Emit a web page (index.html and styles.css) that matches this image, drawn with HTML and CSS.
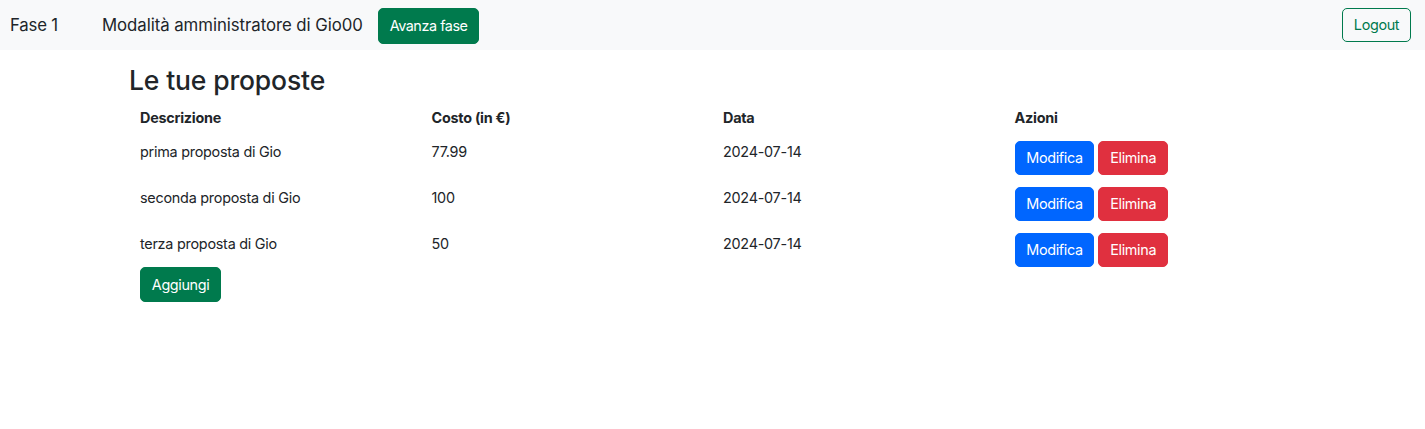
FILE: index.html
```html
<!DOCTYPE html>
<html lang="it">
<head>
<meta charset="utf-8">
<title>Le tue proposte</title>
<link rel="stylesheet" href="styles.css">
</head>
<body>
<nav class="navbar">
  <div class="nav-left">
    <span class="brand">Fase 1</span>
    <span class="admin">Modalità amministratore di Gio00</span>
    <button class="btn btn-success btn-nav">Avanza fase</button>
  </div>
  <button class="btn btn-outline-success btn-logout">Logout</button>
</nav>
<main class="container">
  <h2 class="title">Le tue proposte</h2>
  <div class="table">
    <div class="row head">
      <div class="cell">Descrizione</div>
      <div class="cell">Costo (in €)</div>
      <div class="cell">Data</div>
      <div class="cell">Azioni</div>
    </div>
    <div class="row">
      <div class="cell">prima proposta di Gio</div>
      <div class="cell">77.99</div>
      <div class="cell">2024-07-14</div>
      <div class="cell actions"><button class="btn btn-primary">Modifica</button><button class="btn btn-danger">Elimina</button></div>
    </div>
    <div class="row">
      <div class="cell">seconda proposta di Gio</div>
      <div class="cell">100</div>
      <div class="cell">2024-07-14</div>
      <div class="cell actions"><button class="btn btn-primary">Modifica</button><button class="btn btn-danger">Elimina</button></div>
    </div>
    <div class="row">
      <div class="cell">terza proposta di Gio</div>
      <div class="cell">50</div>
      <div class="cell">2024-07-14</div>
      <div class="cell actions"><button class="btn btn-primary">Modifica</button><button class="btn btn-danger">Elimina</button></div>
    </div>
    <div class="add-row"><button class="btn btn-success">Aggiungi</button></div>
  </div>
</main>
</body>
</html>
```
FILE: styles.css
```css
* { box-sizing: border-box; }
html, body { margin: 0; padding: 0; }
body {
  font-family: Inter, "Noto Sans", "Liberation Sans", sans-serif;
  font-size: 14.4px;
  line-height: 1.5;
  letter-spacing: -0.25px;
  color: #212529;
  background: #fff;
}
.navbar {
  height: 50px;
  background: #f8f9fa;
  display: flex;
  align-items: center;
  justify-content: space-between;
  padding: 0 14px 0 10px;
}
.nav-left { display: flex; align-items: center; padding-top: 1px; }
.brand { font-size: 16.8px; margin-right: 44px; letter-spacing: -0.2px; }
.admin { font-size: 16.8px; margin-right: 15px; letter-spacing: -0.05px; }
.btn {
  font-family: inherit;
  font-size: 14.4px;
  line-height: 21.6px;
  letter-spacing: -0.35px;
  padding: 5.4px 10.8px;
  border: 1px solid transparent;
  border-radius: 5px;
  cursor: pointer;
}
.btn-success { background: #007a4d; border-color: #007a4d; color: #fff; }
.btn-outline-success { background: transparent; border-color: #007a4d; color: #007a4d; }
.btn-primary { background: #0066ff; border-color: #0066ff; color: #fff; }
.btn-danger { background: #e0303f; border-color: #e0303f; color: #fff; }
.btn-nav { height: 36px; letter-spacing: -0.45px; }
.btn-logout { height: 34px; }
.container { padding-left: 129px; }
.title {
  font-size: 26.5px;
  font-weight: 500;
  line-height: 1.2;
  letter-spacing: -0.15px;
  margin: 15px 0 10px;
}
.table { margin-left: 4px; width: 1166px; }
.row { display: grid; grid-template-columns: repeat(4, 1fr); padding-top: 12px; }
.row.head { padding-top: 0; font-weight: 700; }
.cell { padding-left: 7px; min-height: 22px; }
.actions { display: flex; gap: 4px; }
.actions .btn { height: 34px; }
.add-row { padding-left: 7px; }
.add-row .btn { height: 35px; }
```
